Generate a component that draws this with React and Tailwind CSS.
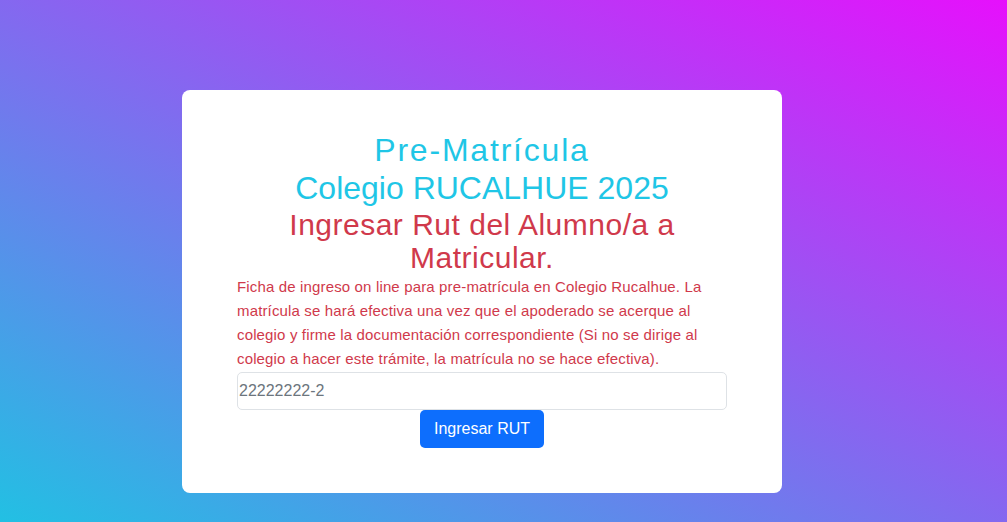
import React from 'react';

export default function App() {
  return (
    <div className="min-h-[522px] w-full bg-[linear-gradient(to_top_right,#22c0e3,#e610fc)] pt-[90px] pb-[29px] font-['Liberation_Sans',Arial,sans-serif]">
      <div className="ml-[182px] w-[600px] rounded-lg bg-white px-[55px] pt-[41px] pb-[45px] text-center">
        <h2 className="text-[32px] leading-[38.4px] text-[#1fc6e6]">
          <span className="tracking-[1.8px]">Pre-Matrícula</span>
          <br />
          Colegio RUCALHUE 2025
        </h2>
        <h3 className="text-[30px] leading-[33.6px] tracking-[0.5px] text-[#d0394b]">
          Ingresar Rut del Alumno/a a Matricular.
        </h3>
        <p className="text-left text-[15px] leading-[24px] tracking-[0.15px] text-[#d0394b] whitespace-nowrap">
          Ficha de ingreso on line para pre-matrícula en Colegio Rucalhue. La
          <br />
          matrícula se hará efectiva una vez que el apoderado se acerque al
          <br />
          colegio y firme la documentación correspondiente (Si no se dirige al
          <br />
          colegio a hacer este trámite, la matrícula no se hace efectiva).
        </p>
        <input
          type="text"
          placeholder="22222222-2"
          className="mt-px block h-[38px] w-full rounded-[5px] border border-[#dee2e6] px-px text-[16px] text-[#495057] placeholder:text-[#6c757d] outline-none"
        />
        <button className="mx-auto block h-[38px] w-[124px] rounded-[5px] bg-[#0d6efd] text-[16px] text-white">
          Ingresar RUT
        </button>
      </div>
    </div>
  );
}
